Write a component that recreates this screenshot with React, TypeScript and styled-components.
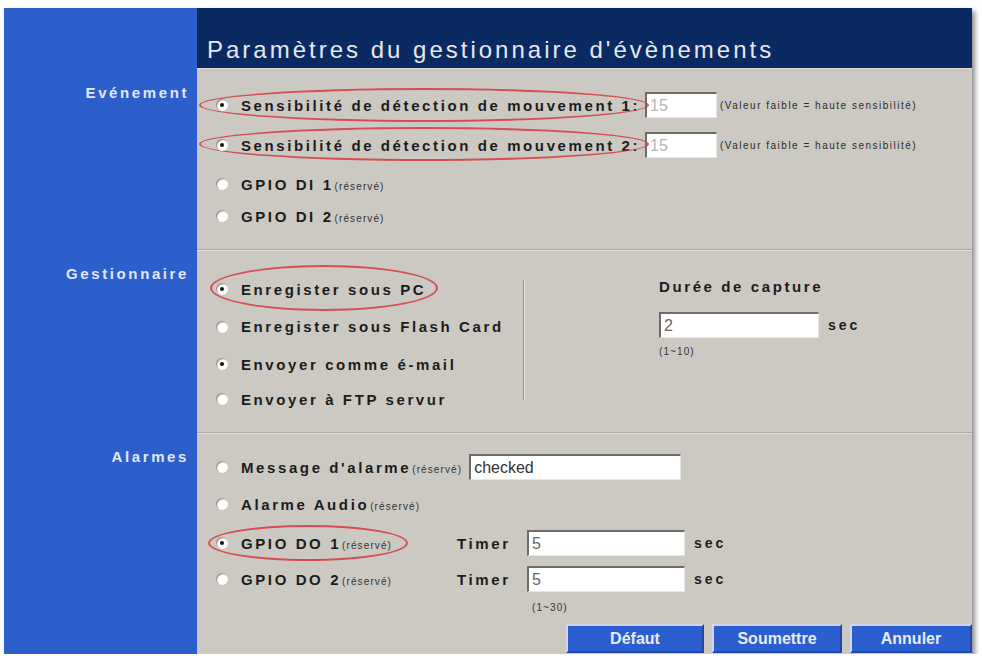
import React from 'react'
import styled, {createGlobalStyle} from 'styled-components'

const GlobalStyle = createGlobalStyle`
  html, body {
    margin: 0;
    padding: 0;
    background: #ffffff;
  }
  body {
    font-family: "Liberation Sans", Arial, sans-serif;
  }
`

const Page = styled.div`
  padding: 8px 0 0 4px;
`

const Panel = styled.div`
  width: 968px;
  height: 646px;
  display: grid;
  grid-template-columns: 193px 1fr;
  grid-template-rows: 60px 181px 183px 1fr;
  background: #ccc9c2;
  box-shadow: 3px 3px 5px rgba(0, 0, 0, 0.45);
`

const Side = styled.div`
  background: #2d5fcc;
  color: #e2e8f6;
  font-weight: bold;
  font-size: 15px;
  letter-spacing: 2.6px;
  line-height: 16px;
  text-align: right;
  padding: 17px 8px 0 0;
`

const Header = styled.div`
  background: #0c2a62;
  color: #e6e8ee;
  font-size: 24px;
  letter-spacing: 3px;
  display: flex;
  align-items: flex-end;
  padding: 0 0 4px 10px;
`

const Section = styled.div<{$sep?: boolean}>`
  position: relative;
  border-top: ${(p) => (p.$sep ? '1px solid #aeaaa3' : '1px solid #e2dfda')};
  box-shadow: ${(p) => (p.$sep ? 'inset 0 1px 0 #e3e0db' : 'none')};
  padding-left: 19px;
`

const Rows = styled.div<{$top: number}>`
  padding-top: ${(p) => p.$top}px;
  display: flex;
  flex-direction: column;
`

const Row = styled.div<{$h: number}>`
  position: relative;
  display: flex;
  align-items: center;
  height: ${(p) => p.$h}px;
`

const Radio = styled.span<{$on?: boolean}>`
  position: relative;
  flex: none;
  width: 12px;
  height: 12px;
  border-radius: 50%;
  margin-right: 13px;
  background: radial-gradient(circle at 62% 62%, #ffffff 45%, #e4e2de 75%, #b9b6b0 100%);
  box-shadow: inset 1px 1px 1px #8e8b86;

  &::after {
    content: '';
    display: ${(p) => (p.$on ? 'block' : 'none')};
    position: absolute;
    left: 4px;
    top: 4px;
    width: 4px;
    height: 4px;
    border-radius: 50%;
    background: #111;
  }
`

const Label = styled.span<{$w?: number}>`
  flex: none;
  width: ${(p) => (p.$w ? `${p.$w}px` : 'auto')};
  font-size: 15px;
  font-weight: bold;
  letter-spacing: 2.6px;
  color: #1c1c1c;
  white-space: nowrap;
`

const Small = styled.span`
  font-size: 10px;
  font-weight: normal;
  letter-spacing: 1.1px;
  color: #333;
  margin-left: 1px;
`

const Note = styled.span`
  font-size: 10px;
  letter-spacing: 1.5px;
  color: #2a2a2a;
  margin-left: 3px;
  white-space: nowrap;
`

const Field = styled.div<{$w: number; $tone?: 'muted' | 'dark'}>`
  flex: none;
  box-sizing: border-box;
  width: ${(p) => p.$w}px;
  height: 26px;
  background: #ffffff;
  border-top: 2px solid #6e6c68;
  border-left: 2px solid #6e6c68;
  border-right: 1px solid #e8e6e2;
  border-bottom: 1px solid #e8e6e2;
  padding: 2px 0 0 3px;
  font-size: 16px;
  line-height: 20px;
  color: ${(p) => (p.$tone === 'muted' ? '#b5b5b5' : p.$tone === 'dark' ? '#333' : '#666')};
  white-space: nowrap;
`

const Unit = styled.span`
  font-size: 14px;
  font-weight: bold;
  letter-spacing: 3px;
  color: #1c1c1c;
  margin-left: 9px;
`

const Range = styled.div<{$left: number; $h: number}>`
  padding-left: ${(p) => p.$left}px;
  height: ${(p) => p.$h}px;
  display: flex;
  align-items: center;
  font-size: 10px;
  letter-spacing: 1.1px;
  color: #333;
`

const Split = styled.div`
  display: grid;
  grid-template-columns: 307px 2px 1fr;
  height: 100%;
`

const Divider = styled.div`
  margin-top: 30px;
  height: 120px;
  border-left: 1px solid #99958e;
  border-right: 1px solid #e2dfda;
`

const Capture = styled.div`
  padding: 28px 0 0 134px;
  display: flex;
  flex-direction: column;
`

const Title = styled.div`
  font-size: 15px;
  font-weight: bold;
  letter-spacing: 2.6px;
  color: #1c1c1c;
  height: 18px;
  margin-bottom: 16px;
`

const Ring = styled.span<{$l: number; $t: number; $w: number; $h: number}>`
  position: absolute;
  left: ${(p) => p.$l}px;
  top: ${(p) => p.$t}px;
  width: ${(p) => p.$w}px;
  height: ${(p) => p.$h}px;
  border: 2px solid rgba(214, 58, 62, 0.85);
  border-radius: 50%;
  pointer-events: none;
`

const Buttons = styled.div`
  position: absolute;
  right: 0;
  bottom: 1px;
  display: flex;
  gap: 8px;
`

const Button = styled.button<{$w: number}>`
  width: ${(p) => p.$w}px;
  height: 29px;
  background: #2b5ecf;
  border: none;
  border-top: 2px solid #cfd8ee;
  border-left: 2px solid #cfd8ee;
  border-bottom: 2px solid #234a9e;
  border-right: 2px solid #234a9e;
  color: #e8ecf6;
  font-family: "Liberation Sans", Arial, sans-serif;
  font-size: 16px;
  font-weight: bold;
  padding: 0;
  cursor: pointer;
`

const App: React.FC = () => {
    return (
        <Page>
            <GlobalStyle/>
            <Panel>
                <Side/>
                <Header>Paramètres du gestionnaire d'évènements</Header>

                <Side>Evénement</Side>
                <Section>
                    <Rows $top={16}>
                        <Row $h={40}>
                            <Ring $l={-17} $t={3} $w={446} $h={30}/>
                            <Radio $on/>
                            <Label $w={404}>Sensibilité de détection de mouvement 1:</Label>
                            <Field $w={72} $tone="muted">15</Field>
                            <Note>(Valeur faible = haute sensibilité)</Note>
                        </Row>
                        <Row $h={40}>
                            <Ring $l={-17} $t={2} $w={446} $h={30}/>
                            <Radio $on/>
                            <Label $w={404}>Sensibilité de détection de mouvement 2:</Label>
                            <Field $w={72} $tone="muted">15</Field>
                            <Note>(Valeur faible = haute sensibilité)</Note>
                        </Row>
                        <Row $h={38}>
                            <Radio/>
                            <Label>GPIO DI 1<Small>(réservé)</Small></Label>
                        </Row>
                        <Row $h={26}>
                            <Radio/>
                            <Label>GPIO DI 2<Small>(réservé)</Small></Label>
                        </Row>
                    </Rows>
                </Section>

                <Side>Gestionnaire</Side>
                <Section $sep>
                    <Split>
                        <Rows $top={20}>
                            <Row $h={38}>
                                <Ring $l={-6} $t={-5} $w={224} $h={42}/>
                                <Radio $on/>
                                <Label>Enregister sous PC</Label>
                            </Row>
                            <Row $h={37}>
                                <Radio/>
                                <Label>Enregister sous Flash Card</Label>
                            </Row>
                            <Row $h={38}>
                                <Radio $on/>
                                <Label>Envoyer comme é-mail</Label>
                            </Row>
                            <Row $h={32}>
                                <Radio/>
                                <Label>Envoyer à FTP servur</Label>
                            </Row>
                        </Rows>
                        <Divider/>
                        <Capture>
                            <Title>Durée de capture</Title>
                            <Row $h={26}>
                                <Field $w={160}>2</Field>
                                <Unit>sec</Unit>
                            </Row>
                            <Range $left={0} $h={26}>(1~10)</Range>
                        </Capture>
                    </Split>
                </Section>

                <Side>Alarmes</Side>
                <Section $sep>
                    <Rows $top={16}>
                        <Row $h={36}>
                            <Radio/>
                            <Label>Message d'alarme<Small>(réservé)</Small></Label>
                            <Field $w={212} $tone="dark" style={{marginLeft: 7}}>checked</Field>
                        </Row>
                        <Row $h={38}>
                            <Radio/>
                            <Label>Alarme Audio<Small>(réservé)</Small></Label>
                        </Row>
                        <Row $h={40}>
                            <Ring $l={-8} $t={2} $w={196} $h={32}/>
                            <Radio $on/>
                            <Label $w={216}>GPIO DO 1<Small>(réservé)</Small></Label>
                            <Label $w={70}>Timer</Label>
                            <Field $w={158}>5</Field>
                            <Unit>sec</Unit>
                        </Row>
                        <Row $h={32}>
                            <Radio/>
                            <Label $w={216}>GPIO DO 2<Small>(réservé)</Small></Label>
                            <Label $w={70}>Timer</Label>
                            <Field $w={158}>5</Field>
                            <Unit>sec</Unit>
                        </Row>
                        <Range $left={316} $h={24}>(1~30)</Range>
                    </Rows>
                    <Buttons>
                        <Button $w={138}>Défaut</Button>
                        <Button $w={130}>Soumettre</Button>
                        <Button $w={122}>Annuler</Button>
                    </Buttons>
                </Section>
            </Panel>
        </Page>
    )
}

export default App
